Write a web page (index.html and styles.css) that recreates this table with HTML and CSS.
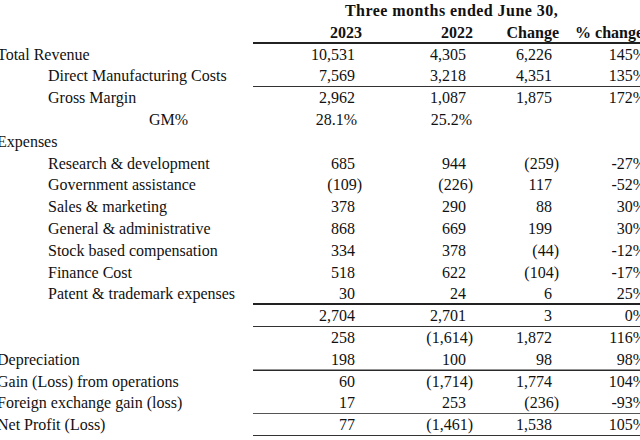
FILE: index.html
```html
<!DOCTYPE html>
<html>
<head>
<meta charset="utf-8">
<link rel="stylesheet" href="styles.css">
</head>
<body>
<div class="sheet">
<table class="fin">
<colgroup>
<col class="c-label"><col class="c-n1"><col class="c-n2"><col class="c-n3"><col class="c-n4">
</colgroup>
<thead>
<tr><th></th><th colspan="4" class="title">Three months ended June 30,</th></tr>
<tr class="hl-thick"><th></th><th class="num h">2023</th><th class="num h">2022</th><th class="num h">Change</th><th class="num h last">% change</th></tr>
</thead>
<tbody>
<tr><td class="l0">Total Revenue</td><td class="num p">10,531</td><td class="num p">4,305</td><td class="num p">6,226</td><td class="num last">145%</td></tr>
<tr class="hl"><td class="l1">Direct Manufacturing Costs</td><td class="num p">7,569</td><td class="num p">3,218</td><td class="num p">4,351</td><td class="num last">135%</td></tr>
<tr><td class="l1">Gross Margin</td><td class="num p">2,962</td><td class="num p">1,087</td><td class="num p">1,875</td><td class="num last">172%</td></tr>
<tr><td class="l2">GM%</td><td class="num pc1">28.1%</td><td class="num pc2">25.2%</td><td class="num"></td><td class="num last"></td></tr>
<tr><td class="l0">Expenses</td><td class="num"></td><td class="num"></td><td class="num"></td><td class="num last"></td></tr>
<tr><td class="l1">Research &amp; development</td><td class="num p">685</td><td class="num p">944</td><td class="num">(259)</td><td class="num last">-27%</td></tr>
<tr><td class="l1">Government assistance</td><td class="num">(109)</td><td class="num">(226)</td><td class="num p">117</td><td class="num last">-52%</td></tr>
<tr><td class="l1">Sales &amp; marketing</td><td class="num p">378</td><td class="num p">290</td><td class="num p">88</td><td class="num last">30%</td></tr>
<tr><td class="l1">General &amp; administrative</td><td class="num p">868</td><td class="num p">669</td><td class="num p">199</td><td class="num last">30%</td></tr>
<tr><td class="l1">Stock based compensation</td><td class="num p">334</td><td class="num p">378</td><td class="num">(44)</td><td class="num last">-12%</td></tr>
<tr><td class="l1">Finance Cost</td><td class="num p">518</td><td class="num p">622</td><td class="num">(104)</td><td class="num last">-17%</td></tr>
<tr class="hl-thick"><td class="l1">Patent &amp; trademark expenses</td><td class="num p">30</td><td class="num p">24</td><td class="num p">6</td><td class="num last">25%</td></tr>
<tr class="hl"><td class="l0"></td><td class="num p">2,704</td><td class="num p">2,701</td><td class="num p">3</td><td class="num last">0%</td></tr>
<tr><td class="l0"></td><td class="num p">258</td><td class="num">(1,614)</td><td class="num p">1,872</td><td class="num last">116%</td></tr>
<tr class="hl-mid"><td class="l0">Depreciation</td><td class="num p">198</td><td class="num p">100</td><td class="num p">98</td><td class="num last">98%</td></tr>
<tr><td class="l0">Gain (Loss) from operations</td><td class="num p">60</td><td class="num">(1,714)</td><td class="num p">1,774</td><td class="num last">104%</td></tr>
<tr class="hl-gray"><td class="l0">Foreign exchange gain (loss)</td><td class="num p">17</td><td class="num p">253</td><td class="num">(236)</td><td class="num last">-93%</td></tr>
<tr class="hl"><td class="l0">Net Profit (Loss)</td><td class="num p">77</td><td class="num">(1,461)</td><td class="num p">1,538</td><td class="num last">105%</td></tr>
</tbody>
</table>
</div>
</body>
</html>
```
FILE: styles.css
```css
html, body {
  margin: 0;
  padding: 0;
  background: #ffffff;
  overflow: hidden;
}

.sheet {
  margin-left: -3px;
  width: 660px;
}

.fin {
  font-family: "Liberation Serif", "Times New Roman", serif;
  font-size: 16px;
  color: #111;
  border-collapse: separate;
  border-spacing: 0;
  table-layout: fixed;
  width: 653px;
}

.c-label { width: 256px; }
.c-n1 { width: 109px; }
.c-n2 { width: 111px; }
.c-n3 { width: 86px; }
.c-n4 { width: 91px; }

.fin th,
.fin td {
  height: 21.8px;
  line-height: 21.8px;
  padding: 0;
  white-space: nowrap;
  vertical-align: middle;
}

.fin th {
  font-weight: bold;
}

.title {
  text-align: center;
  letter-spacing: 0.45px;
  padding-left: 6px;
}

.num {
  text-align: right;
}

td.last {
  padding-right: 4px;
}

.h.last {
  padding-right: 7px;
}

.p {
  padding-right: 7px !important;
}

.pc1 {
  padding-right: 5px !important;
}

.pc2 {
  padding-right: 1px !important;
}

.l0 { padding-left: 0; }
.l1 { padding-left: 51px !important; }
.l2 { padding-left: 152px !important; }

.hl-thick > .num,
.hl-thick > .h {
  box-shadow: inset 0 -2px 0 #222;
}

.hl > .num {
  box-shadow: inset 0 -1px 0 #333;
}

.hl-mid > .num {
  box-shadow: inset 0 -1.5px 0 #2a2a2a;
}

.hl-gray > .num {
  box-shadow: inset 0 -1px 0 #555;
}
```
